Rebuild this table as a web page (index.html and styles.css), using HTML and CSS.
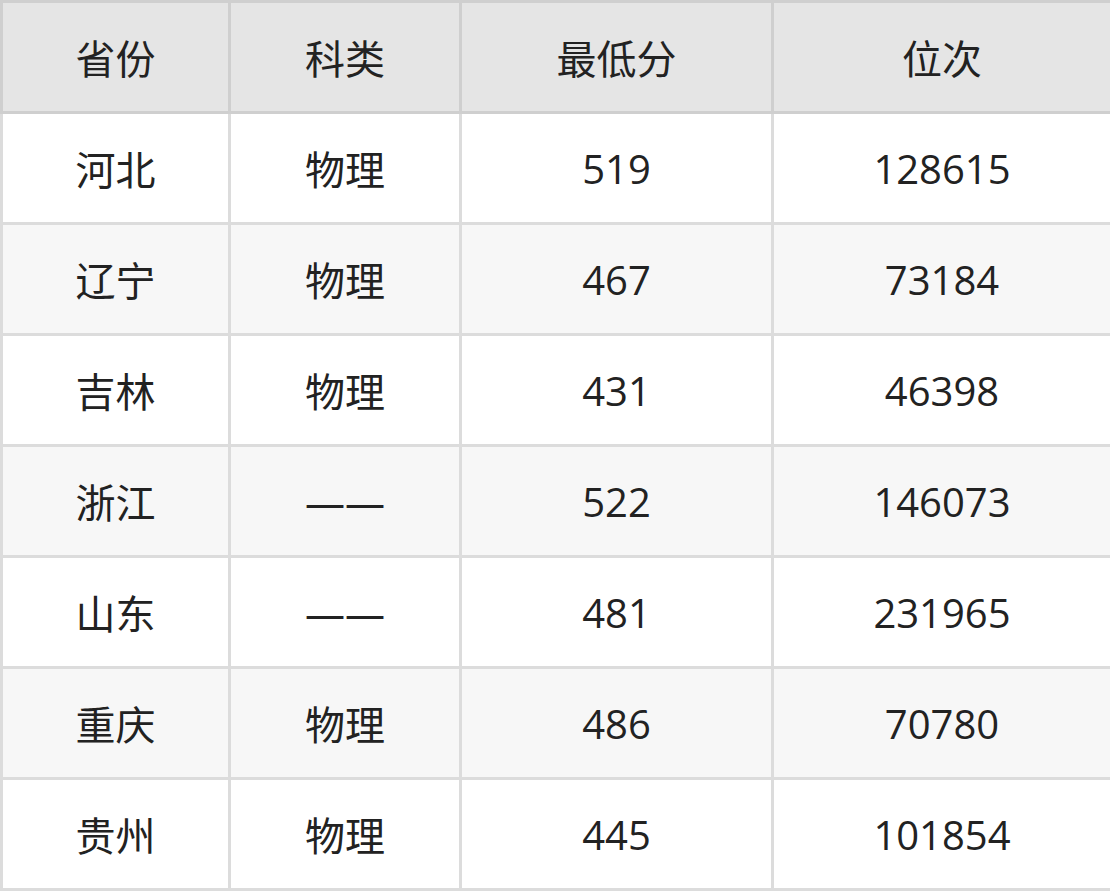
FILE: index.html
```html
<!DOCTYPE html>
<html lang="zh">
<head>
<meta charset="utf-8">
<link rel="stylesheet" href="styles.css">
</head>
<body>
<table class="score-table">
  <colgroup>
    <col class="c1"><col class="c2"><col class="c3"><col class="c4">
  </colgroup>
  <thead>
    <tr><th>省份</th><th>科类</th><th>最低分</th><th>位次</th></tr>
  </thead>
  <tbody>
    <tr><td>河北</td><td>物理</td><td>519</td><td>128615</td></tr>
    <tr><td>辽宁</td><td>物理</td><td>467</td><td>73184</td></tr>
    <tr><td>吉林</td><td>物理</td><td>431</td><td>46398</td></tr>
    <tr><td>浙江</td><td>——</td><td>522</td><td>146073</td></tr>
    <tr><td>山东</td><td>——</td><td>481</td><td>231965</td></tr>
    <tr><td>重庆</td><td>物理</td><td>486</td><td>70780</td></tr>
    <tr><td>贵州</td><td>物理</td><td>445</td><td>101854</td></tr>
  </tbody>
</table>
</body>
</html>
```

FILE: styles.css
```css
html, body {
  margin: 0;
  padding: 0;
  background: #ffffff;
}

.score-table {
  width: 1110px;
  border-collapse: collapse;
  table-layout: fixed;
  font-family: "Open Sans", "Noto Sans CJK SC", sans-serif;
  font-size: 40px;
  color: #222222;
}

.c1 { width: 228px; }
.c2 { width: 231px; }
.c3 { width: 312px; }
.c4 { width: 339px; }

.score-table th,
.score-table td {
  border: 3px solid #dcdcdc;
  height: 108px;
  padding: 0;
  text-align: center;
  vertical-align: middle;
  font-weight: normal;
}

.score-table th {
  background: #e5e5e5;
  border-color: #cfcfcf;
}

.score-table tbody tr:nth-child(even) td {
  background: #f7f7f7;
}
```
